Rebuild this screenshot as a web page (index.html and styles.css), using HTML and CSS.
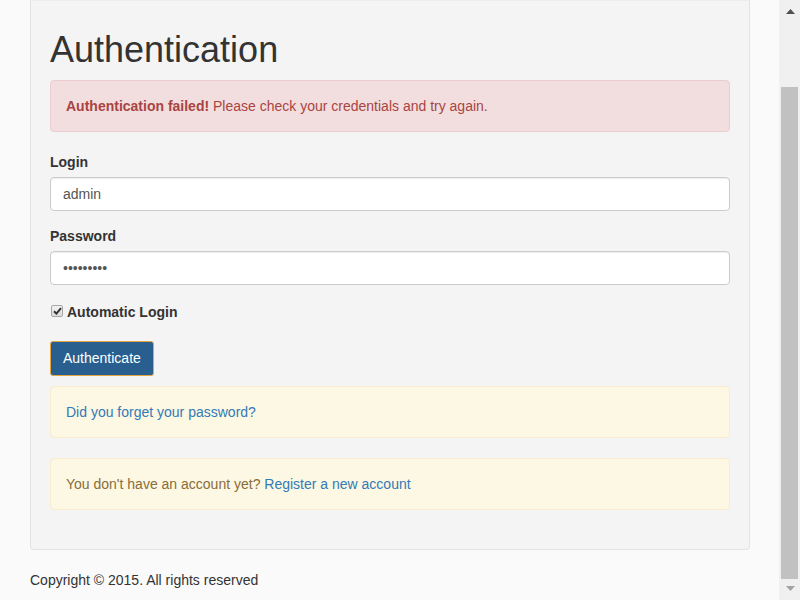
FILE: index.html
```html
<!DOCTYPE html>
<html lang="en">
<head>
<meta charset="utf-8">
<title>Authentication</title>
<link rel="stylesheet" href="styles.css">
</head>
<body>
<div class="window">
  <div class="page">
    <div class="container">
      <div class="well">
        <h1 class="title">Authentication</h1>
        <div class="alert alert-danger"><strong>Authentication failed!</strong> Please check your credentials and try again.</div>
        <form class="form">
          <div class="form-group">
            <label class="label" for="login">Login</label>
            <input class="form-control" id="login" type="text" value="admin">
          </div>
          <div class="form-group">
            <label class="label" for="password">Password</label>
            <input class="form-control" id="password" type="password" value="123456789">
          </div>
          <div class="checkbox">
            <span class="check-box"><svg width="9" height="8" viewBox="0 0 9 8"><path d="M1 4.2 L3.4 6.6 L8 1.2" fill="none" stroke="#333" stroke-width="2"/></svg></span>
            <span class="check-label">Automatic Login</span>
          </div>
          <div class="actions">
            <button class="btn" type="button">Authenticate</button>
          </div>
        </form>
        <div class="alert alert-warning"><a class="link" href="#">Did you forget your password?</a></div>
        <div class="alert alert-warning">You don't have an account yet? <a class="link" href="#">Register a new account</a></div>
      </div>
      <footer class="footer">Copyright © 2015. All rights reserved</footer>
    </div>
  </div>
  <div class="scrollbar">
    <div class="sb-arrow"><svg width="9" height="5" viewBox="0 0 9 5"><path d="M4.5 0 L9 5 L0 5 Z" fill="#505050"/></svg></div>
    <div class="sb-space"></div>
    <div class="sb-thumb"></div>
    <div class="sb-arrow down"><svg width="9" height="5" viewBox="0 0 9 5"><path d="M0 0 L9 0 L4.5 5 Z" fill="#a3a3a3"/></svg></div>
  </div>
</div>
</body>
</html>
```

FILE: styles.css
```css
* { box-sizing: border-box; }
html, body { margin: 0; padding: 0; }
body {
  font-family: "Liberation Sans", Arial, sans-serif;
  font-size: 14px;
  line-height: 20px;
  color: #333;
  background: #fafafa;
}
.window {
  display: flex;
  width: 800px;
  height: 600px;
  overflow: hidden;
}
.page {
  flex: 1;
  height: 600px;
  overflow: hidden;
}
.container {
  width: 720px;
  margin-left: 30px;
}
.well {
  background: #f4f4f4;
  border: 1px solid #e3e3e3;
  border-top: 0;
  border-radius: 0 0 4px 4px;
  box-shadow: inset 0 1px 1px rgba(0,0,0,.03);
  padding: 10px 19px 19px;
}
.title {
  font-size: 36px;
  font-weight: 400;
  line-height: 39.6px;
  margin: 20px 0 10px;
  color: #333;
}
.alert {
  padding: 15px;
  border: 1px solid transparent;
  border-radius: 4px;
  margin-bottom: 20px;
}
.alert-danger {
  background: #f2dede;
  border-color: #ebccd1;
  color: #a94442;
}
.alert-warning {
  background: #fcf8e3;
  border-color: #faebcc;
  color: #8a6d3b;
}
.link { color: #337ab7; text-decoration: none; }
.form { margin: 0; }
.form-group { margin-bottom: 15px; }
.label {
  display: inline-block;
  font-weight: 700;
  margin-bottom: 5px;
}
.form-control {
  display: block;
  width: 100%;
  height: 34px;
  padding: 6px 12px;
  font-family: "Liberation Sans", Arial, sans-serif;
  font-size: 14px;
  line-height: 20px;
  color: #555;
  background: #fff;
  border: 1px solid #ccc;
  border-radius: 4px;
  box-shadow: inset 0 1px 1px rgba(0,0,0,.075);
  outline: none;
}
.checkbox {
  display: flex;
  align-items: center;
  gap: 4px;
  height: 20px;
  margin: 17px 0 19px 1px;
  font-weight: 700;
}
.check-box {
  width: 12px;
  height: 12px;
  border: 1px solid #a6a6a6;
  border-radius: 2px;
  background: linear-gradient(#f2f2f2, #dcdcdc);
  display: flex;
  align-items: center;
  justify-content: center;
  margin-top: -2px;
}
.actions { margin-bottom: 10px; }
.btn {
  font-family: "Liberation Sans", Arial, sans-serif;
  font-size: 14px;
  line-height: 20px;
  padding: 6px 12px;
  height: 35px;
  color: #fff;
  background: #285f8f;
  border: 1px solid #e3a53f;
  border-radius: 3px;
  cursor: pointer;
}
.footer {
  margin-top: 20px;
  line-height: 20px;
  color: #333;
}
.scrollbar {
  width: 21px;
  height: 600px;
  background: #f0f0f0;
  display: flex;
  flex-direction: column;
}
.sb-arrow {
  height: 21px;
  display: flex;
  justify-content: center;
  padding-top: 9px;
  padding-left: 1px;
}
.sb-arrow.down { padding-top: 7px; }
.sb-space { height: 66px; }
.sb-thumb {
  height: 492px;
  margin: 0 2px;
  background: #c1c1c1;
}
```
